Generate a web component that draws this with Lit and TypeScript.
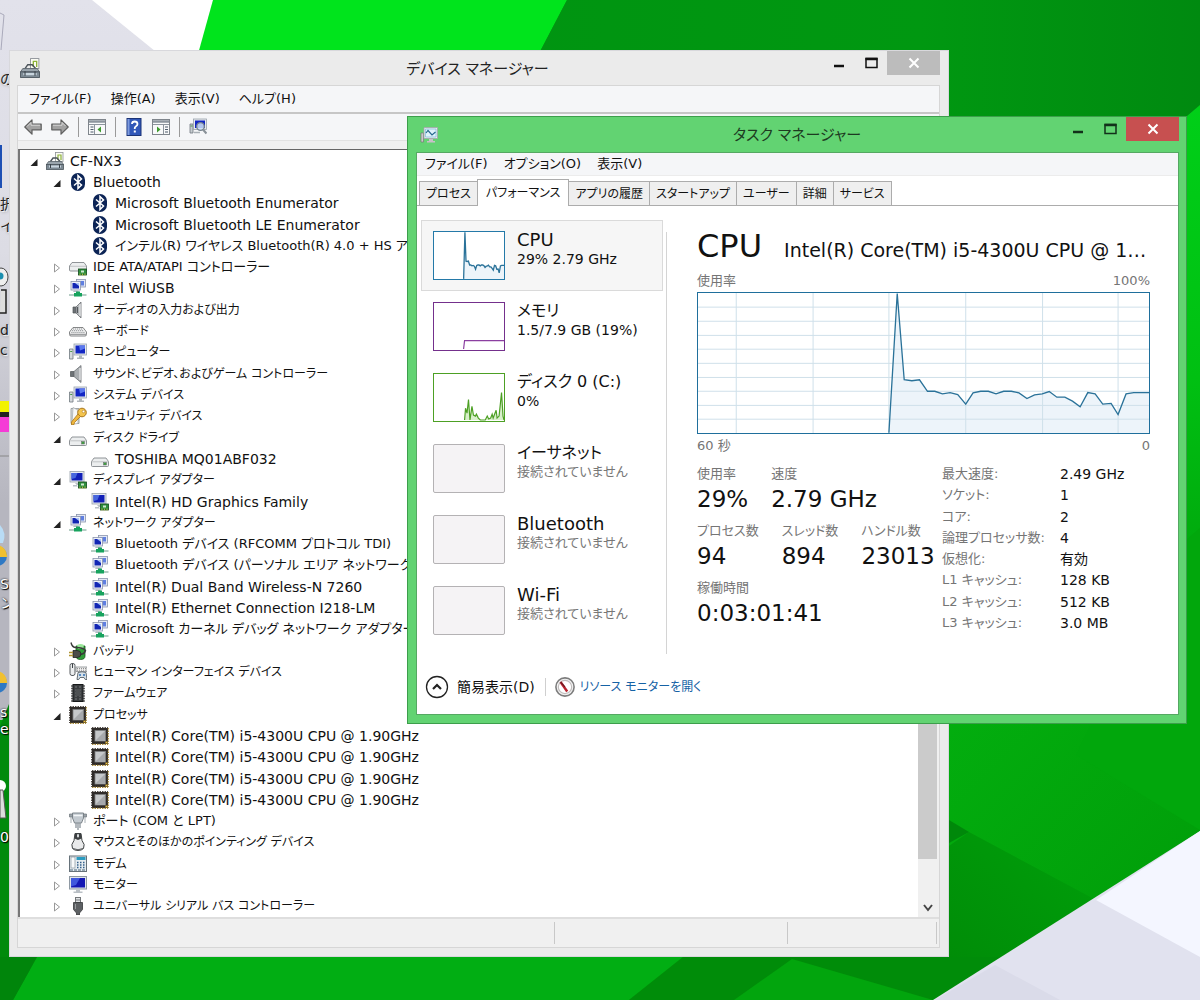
import { LitElement, html, svg, css } from "lit";
import { customElement } from "lit/decorators.js";

/* ---------- Icons, all drawn on an 18 x 18 grid ---------- */

const pcTower = svg`
  <path d="M.500 6h3.500v10H.500z" fill="#d6dadd" stroke="#6f777d" stroke-width=".8"/>
  <path d="M1.200 8.500h2" stroke="#4b9a4b"/>
  <rect x="5" y="1" width="12.500" height="11" fill="#e6eaee" stroke="#9aa4ad" stroke-width=".8"/>
  <rect x="6.500" y="2.500" width="9.500" height="8" fill="#1226c4"/>
  <path d="M10 2.500h6v3l-5 2z" fill="#5a78ee"/>
  <path d="M10 12.500h3v2h2v1.500H8v-1.500h2z" fill="#b0b7bd"/>`;

const chipBadge = svg`
  <rect x="9.500" y="11" width="8" height="6" fill="#2f8f3e" stroke="#0f4a1a" stroke-width=".8"/>
  <path d="M11 17.500v-2M13.500 17.500v-2M16 17.500v-2" stroke="#d9c64a" stroke-width=".8"/>
  <rect x="12" y="12.500" width="3" height="2" fill="#cfe8cf"/>`;

const driveBody = svg`
  <path d="M3 8h12l2.500 3.500v4q0 1-1 1h-15q-1 0-1-1v-4z" fill="#eceeef" stroke="#85898c" stroke-width=".9"/>
  <path d="M1 11.800h16" stroke="#b6b9bb" stroke-width=".8"/>
  <rect x="12.500" y="12.500" width="3" height="2.500" fill="#3f9e3f" stroke="#6b6e70" stroke-width=".5"/>`;

const icons: Record<string, unknown> = {
  root: svg`
    <rect x="9.500" y=".500" width="7.500" height="9" fill="#fbfcf4" stroke="#8c9196" stroke-width=".8"/>
    <path d="M12 8V3h3v5" fill="none" stroke="#8db23a" stroke-width="1.200"/>
    <path d="M4.500 9.500 7 6h4l3 3.500" fill="none" stroke="#4c545a" stroke-width="1.300"/>
    <path d="M2.500 9.500h13l2 3H.500z" fill="#9aa5ad" stroke="#59636b" stroke-width=".8"/>
    <rect x=".500" y="12.500" width="17" height="5" fill="#7c8993" stroke="#4b555d" stroke-width=".8"/>
    <rect x="3" y="13.500" width="12" height="2" fill="#c9d6df"/>
    <path d="M4.500 12v4M13.500 12v4" stroke="#3b444b"/>`,
  bluetooth: svg`
    <rect x="2" y="0" width="14" height="18" rx="7" fill="#0c2456"/>
    <path d="M5 5.500 12.500 12 9 15.500v-13L12.500 6 5 12.500" fill="none" stroke="#fff" stroke-width="1.500"/>`,
  ide: svg`
    <path d="M3 4.500h12L17.500 8v4q0 1-1 1h-15q-1 0-1-1V8z" fill="#eceeef" stroke="#85898c" stroke-width=".9"/>
    <path d="M1 8.300h16" stroke="#b6b9bb" stroke-width=".8"/>${chipBadge}`,
  network: svg`
    <rect x="7.500" y=".500" width="9" height="7.500" fill="#e3e8f5" stroke="#8a95ad" stroke-width=".8"/>
    <rect x="9" y="2" width="6" height="4.500" fill="#5f7fe0"/>
    <rect x="2" y="2.500" width="9.500" height="8.500" fill="#eef1f9" stroke="#8a95ad" stroke-width=".8"/>
    <rect x="3.500" y="4" width="6.500" height="5.500" fill="#1226b4"/>
    <path d="M6 4h4v3z" fill="#a9c2f7"/>
    <path d="M5 11.500h4l1 1.500H4z" fill="#b3bac4"/>
    <path d="M0 16h17.500" stroke="#9dbcb0" stroke-width="1.500"/>
    <path d="M7 12.500h4v1.500h2v3.500H5V14h2z" fill="#17a35e"/>`,
  speaker: svg`
    <path d="M4 6h3v6H4z" fill="#6d7276" stroke="#4f5356" stroke-width=".7"/>
    <path d="M7 6 12 1v16l-5-5z" fill="#b6babd" stroke="#6c7073" stroke-width=".8"/>
    <path d="M8.500 6v6" stroke="#55595c" stroke-width="1.200"/>
    <path d="M11 3v12" stroke="#dcdedf" stroke-width="1.500"/>`,
  audio: svg`
    <path d="M1.500 6.500h3.500v5H1.500z" fill="#6d7276" stroke="#4f5356" stroke-width=".7"/>
    <path d="M5 6.500 12 .500v17l-7-6z" fill="#a9adb0" stroke="#6c7073" stroke-width=".8"/>
    <path d="M11 3v12" stroke="#dcdedf" stroke-width="1.500"/>`,
  keyboard: svg`
    <path d="M4 5.500h10L17.500 10v2.500q0 1.500-1.500 1.500H2q-1.500 0-1.500-1.500V10z" fill="#f2f2f2" stroke="#77797b" stroke-width=".9"/>
    <path d="M4 7h10M3 8.700h12M2.300 10.400h13.500" stroke="#85898c" stroke-width=".9" stroke-dasharray="1.200 .8"/>
    <path d="M1 12.300h16" stroke="#86898b"/>`,
  computer: pcTower,
  key: svg`
    <path d="M2 1.500h8v15H2z" fill="#dfe3e6" stroke="#8c9296" stroke-width=".8"/>
    <path d="M4 .500 9 3v13.500l-6 1z" fill="#f6f7f8" stroke="#a0a6aa" stroke-width=".7"/>
    <circle cx="13" cy="5.500" r="4.300" fill="#f4c44d" stroke="#a9761a"/>
    <circle cx="14.500" cy="4.500" r="1.300" fill="#fff" stroke="#a9761a" stroke-width=".6"/>
    <path d="m9 7 2.500 2.500-6 6-.500 2-2.500.500v-3z" fill="#f0b83e" stroke="#a9761a" stroke-width=".8"/>`,
  disk: driveBody,
  display: svg`
    <rect x="1" y=".500" width="14" height="10.500" fill="#e6eaf0" stroke="#98a1ab" stroke-width=".8"/>
    <rect x="2.500" y="2" width="11" height="7.500" fill="#1220b8"/>
    <path d="M2.500 2h6l-2 5-4 1z" fill="#4767de"/>
    <path d="M6 12h4v2H4v1.500h5" fill="#b9c0c6"/>${chipBadge}`,
  battery: svg`
    <path d="M7 4h9v10q0 3.500-4.500 3.500T7 14z" fill="#2f9e38" stroke="#17501c" stroke-width=".8"/>
    <path d="M8 3q3.500-2 7 0l-1 4H9z" fill="#9be69a"/>
    <path d="M2 .500q1 5 5 5 7 0 9.500 3-1 4-6.500 4" fill="none" stroke="#3b3b3b" stroke-width="1.400"/>
    <path d="M4 8.500h4q4 0 4 3.500t-4 3.500H4z" fill="#4b4b48" stroke="#222" stroke-width=".8"/>
    <path d="M0 10.500h4M0 13.500h4" stroke="#b0942f" stroke-width="1.500"/>`,
  hid: svg`
    <rect x="1" y=".500" width="5" height="12" rx="2" fill="#eceeef" stroke="#565b5f"/>
    <path d="M3.500 1v4" stroke="#3d4246"/>
    <path d="M7 4h11v4.500H7z" fill="#f0f0f0" stroke="#84888b" stroke-width=".8"/>
    <path d="M8 5.500h9M8 7.200h9" stroke="#777" stroke-dasharray="1 1" stroke-width=".8"/>
    <path d="M9 9.500q4-1.500 8 0l1 7q-2 1-3-2h-4q-1 3-3 2z" fill="#d5e0e8" stroke="#586168" stroke-width=".9"/>
    <circle cx="11" cy="12" r="1" fill="#2f6fb5"/><circle cx="15" cy="12" r="1" fill="#2f6fb5"/>`,
  firmware: svg`
    <path d="M2 2h14M2 4.500h14M2 7h14M2 9.500h14M2 12h14M2 14.500h14M2 17h14" stroke="#666" stroke-width="1.300"/>
    <rect x="4" y=".500" width="10" height="17" fill="#3b3e40" stroke="#17191a"/>
    <path d="M7 2v14M11 2v14" stroke="#77797b" stroke-dasharray="2 1"/>
    <rect x="6.500" y="5" width="5" height="7" fill="#4d5052"/>`,
  cpu: svg`
    <rect x="1" y="1" width="16" height="16" fill="#2f2b29"/>
    <path d="M1 17.300h16M17.300 1v16" stroke="#a98a3a" stroke-width="1.200" stroke-dasharray="1.500 1"/>
    <path d="M.500 1v16M1 .500h16" stroke="#55504c" stroke-dasharray="1.500 1"/>
    <rect x="4" y="3.500" width="10.500" height="10.500" fill="#c6c8ca" stroke="#7e8082" stroke-width=".8"/>
    <path d="M4.500 13.500 14 4v9.500z" fill="#a7a9ac"/>
    <path d="M14.500 15.500h2" stroke="#f0c23c" stroke-width="1.800"/>`,
  port: svg`
    <path d="M.500 2h3v3h-3zM14.500 2h3v3h-3z" fill="#9ba3a9" stroke="#6f767b" stroke-width=".7"/>
    <path d="M3.500 1h11v5l-2 5h-7l-2-5z" fill="#c3cad0" stroke="#737b81" stroke-width=".9"/>
    <path d="M4.500 3.500h9" stroke="#f3f6f8" stroke-width="1.500"/>
    <path d="M2 5v6M16 5v6" stroke="#a9b0b5"/>
    <path d="M7 11v5M9 11v7M11 11v5" stroke="#8b949b" stroke-width="1.300"/>`,
  mouse: svg`
    <path d="M6 .500h6l1 7q3.500 4 1.500 8-2 2-5.500 2t-5.500-2q-2-4 1.500-8z" fill="#e9eaeb" stroke="#414446"/>
    <path d="M6 .500h6l.600 5-3.600 1.500-3.600-1.500z" fill="#3d4042"/>
    <rect x="8" y="1" width="2" height="3.500" rx="1" fill="#d9dcde"/>
    <path d="M4 15.500q5 2.500 10 0" stroke="#5b5f61" fill="none"/>`,
  modem: svg`
    <rect x=".500" y="1" width="17" height="15.500" fill="#e6edf1" stroke="#66727a"/>
    <rect x="2" y="2" width="4" height="11" fill="#f8fafb" stroke="#8a969e" stroke-width=".7"/>
    <rect x="7.500" y="2" width="9" height="3" fill="#2a9bc0"/>
    <path d="M8 7.500h8M8 10h8M8 12.500h8" stroke="#35608a" stroke-width="1.500" stroke-dasharray="1.500 1.500"/>
    <path d="M1 15h16" stroke="#4a6478" stroke-dasharray="3 1"/>`,
  monitor: svg`
    <rect x=".500" y=".500" width="17" height="12.500" fill="#dfe4ea" stroke="#8f99a3"/>
    <rect x="2" y="2" width="14" height="9.500" fill="#1418b4"/>
    <path d="M2 2h9l-4 7-5 1.500z" fill="#3f57dd"/>
    <path d="M7 13.500h4v2h2.500v1.500h-9v-1.500H7z" fill="#b9bfc5"/>`,
  usb: svg`
    <rect x="6.500" y=".500" width="5" height="5" fill="#e1e3e5" stroke="#73777a"/>
    <path d="M8 2v2M10 2v2" stroke="#73777a"/>
    <path d="M4.500 5.500h9v7L10.500 16v2h-3v-2l-3-3.500z" fill="#5d6063" stroke="#37393b" stroke-width=".8"/>
    <path d="M6.500 7v5" stroke="#989b9e"/>`,
  taskmgr: svg`
    <path d="M1 7h2.500v9H1z" fill="#c9c9c9" stroke="#777" stroke-width=".7"/>
    <path d="M4 1.500h13.500v11H4z" fill="#e9ecee" stroke="#a0a6aa" stroke-width=".8"/>
    <path d="M5.500 3h10.500v8H5.500z" fill="#dff3fb" stroke="#6db4d6" stroke-width=".6"/>
    <path d="M6 7 8 4.500 12 9l3.500-3" fill="none" stroke="#27688e" stroke-width="1.200"/>
    <path d="M9 13h4v2h2v1.500H7V15h2z" fill="#c9bfc8"/>`,
  meter: svg`
    <circle cx="9" cy="9" r="8.200" fill="#f1f1f1" stroke="#7c7c7c" stroke-width="1.400"/>
    <circle cx="9" cy="9" r="6" fill="#fff" stroke="#c0bcbc"/>
    <path d="M5 4.500 11 13" stroke="#b8202c" stroke-width="2.200"/>
    <path d="M5 4.500 9 9" stroke="#5c1a20"/>`,
  back: svg`<path d="M.800 9 8 1.800v4.400h9.200v5.600H8v4.400z" fill="#a2a2a2" stroke="#5e5e5e" stroke-width="1.200" stroke-linejoin="round"/><path d="M3 8.500 7 4.500v2.700h9" fill="none" stroke="#d8d8d8"/>`,
  forward: svg`<path d="M17.200 9 10 1.800v4.400H.800v5.600H10v4.400z" fill="#a2a2a2" stroke="#5e5e5e" stroke-width="1.200" stroke-linejoin="round"/><path d="M2 7.200h9V4.500L14.500 8" fill="none" stroke="#d8d8d8"/>`,
  tree: svg`
    <rect x=".500" y="1.500" width="17" height="15" fill="#f8f9fa" stroke="#7f858c"/>
    <path d="M1 3.500h16" stroke="#8d959e" stroke-width="2.500"/><path d="M1 6.500h16M6.500 7v9" stroke="#8d959e"/>
    <path d="M2.500 9h3M2.500 11.500h3M2.500 14h3" stroke="#4d5b6b"/>
    <path d="M13 8.500v6L9.500 11.500z" fill="#3c9a2c"/>`,
  help: svg`
    <rect x="2" y=".500" width="14" height="17" fill="#3157b8" stroke="#1b3376"/>
    <path d="M2.500 1h2v16h-2z" fill="#7e9bdc"/>
    <path d="M7 6q0-2.500 2.700-2.500T12.500 6q0 1.500-1.500 2.300T9.700 11" fill="none" stroke="#fff" stroke-width="1.800"/>
    <rect x="8.800" y="12.500" width="2" height="2" fill="#fff"/>`,
  run: svg`
    <rect x=".500" y="1.500" width="17" height="15" fill="#f8f9fa" stroke="#7f858c"/>
    <path d="M1 3.500h16" stroke="#8d959e" stroke-width="2.500"/><path d="M1 6.500h16M11.500 7v9" stroke="#8d959e"/>
    <path d="M13 9h3M13 11.500h3M13 14h3" stroke="#4d5b6b"/>
    <path d="M5 8.500v6l3.500-3z" fill="#3c9a2c"/>`,
  scan: svg`
    <path d="M1 6h3v9H1z" fill="#c6ccd0" stroke="#6f777d" stroke-width=".8"/><path d="M1.500 8h2" stroke="#4b9a4b"/>
    <rect x="4.500" y="1" width="13" height="10.500" fill="#e6eaee" stroke="#98a1aa" stroke-width=".8"/>
    <rect x="6" y="2.500" width="10" height="7.500" fill="#1226c4"/>
    <circle cx="11.500" cy="8.500" r="3.800" fill="#cfe2f8" fill-opacity=".85" stroke="#76828d" stroke-width="1.300"/>
    <path d="m14 11.500 3.500 4" stroke="#8a9299" stroke-width="2.200"/>
    <path d="M5 14.500h6" stroke="#aab1b7" stroke-width="1.500"/>`,
};

const icon = (name: string) =>
  html`<svg class="icon" viewBox="0 0 18 18" aria-hidden="true">${icons[name]}</svg>`;

const script = (text: string) =>
  /[ぁ-ヶ]/.test(text) ? (/[A-Za-z]/.test(text) ? "mixed" : "kana") : "latin";

const base = css`
  * { box-sizing: border-box; }
  :host {
    font-family: "DejaVu Sans", "Noto Sans CJK JP", sans-serif;
    font-feature-settings: "palt";
    font-size: 14px;
    line-height: 20px;
    color: #111;
  }
  button {
    font: inherit;
    font-feature-settings: inherit;
    color: inherit;
    background: none;
    border: 0;
    margin: 0;
    padding: 0;
    text-align: left;
    white-space: nowrap;
  }
  .icon { width: 18px; height: 18px; flex: none; display: block; }
  .titlebar { display: flex; align-items: flex-start; flex: none; }
  .title { flex: 1; text-align: center; font-size: 15px; font-weight: 400; margin: 0; color: #222; }
  .controls { display: flex; }
  .ctl { height: 24px; width: 32px; display: grid; place-items: center; }
  .ctl svg { display: block; width: 14px; height: 14px; }
  .ctl.close { width: 53px; color: #fff; }
  .menu { display: flex; align-items: center; background: #f5f6f8; flex: none; font-size: 13px; }
`;

const controls = html`
  <div class="controls">
    <button class="ctl" aria-label="最小化">
      <svg viewBox="0 0 14 14"><path d="M2 10h10" stroke="currentColor" stroke-width="2.500" /></svg>
    </button>
    <button class="ctl" aria-label="最大化">
      <svg viewBox="0 0 14 14"><path d="M2 2.500h11v9H2z" fill="none" stroke="currentColor" stroke-width="1.500" /><path d="M1.500 3h12" stroke="currentColor" stroke-width="2.500" /></svg>
    </button>
    <button class="ctl close" aria-label="閉じる">
      <svg viewBox="0 0 14 14"><path d="m2.500 2.500 9 9M11.500 2.500l-9 9" stroke="currentColor" stroke-width="2" /></svg>
    </button>
  </div>`;

/* ---------- Device Manager ---------- */

type Node = [level: number, icon: string, label: string, state: "open" | "closed" | "leaf"];

const cpuName = "Intel(R) Core(TM) i5-4300U CPU @ 1.90GHz";

const nodes: Node[] = [
  [0, "root", "CF-NX3", "open"],
  [1, "bluetooth", "Bluetooth", "open"],
  [2, "bluetooth", "Microsoft Bluetooth Enumerator", "leaf"],
  [2, "bluetooth", "Microsoft Bluetooth LE Enumerator", "leaf"],
  [2, "bluetooth", "インテル(R) ワイヤレス Bluetooth(R) 4.0 + HS アダプター", "leaf"],
  [1, "ide", "IDE ATA/ATAPI コントローラー", "closed"],
  [1, "network", "Intel WiUSB", "closed"],
  [1, "speaker", "オーディオの入力および出力", "closed"],
  [1, "keyboard", "キーボード", "closed"],
  [1, "computer", "コンピューター", "closed"],
  [1, "audio", "サウンド、ビデオ、およびゲーム コントローラー", "closed"],
  [1, "computer", "システム デバイス", "closed"],
  [1, "key", "セキュリティ デバイス", "closed"],
  [1, "disk", "ディスク ドライブ", "open"],
  [2, "disk", "TOSHIBA MQ01ABF032", "leaf"],
  [1, "display", "ディスプレイ アダプター", "open"],
  [2, "display", "Intel(R) HD Graphics Family", "leaf"],
  [1, "network", "ネットワーク アダプター", "open"],
  [2, "network", "Bluetooth デバイス (RFCOMM プロトコル TDI)", "leaf"],
  [2, "network", "Bluetooth デバイス (パーソナル エリア ネットワーク)", "leaf"],
  [2, "network", "Intel(R) Dual Band Wireless-N 7260", "leaf"],
  [2, "network", "Intel(R) Ethernet Connection I218-LM", "leaf"],
  [2, "network", "Microsoft カーネル デバッグ ネットワーク アダプター", "leaf"],
  [1, "battery", "バッテリ", "closed"],
  [1, "hid", "ヒューマン インターフェイス デバイス", "closed"],
  [1, "firmware", "ファームウェア", "closed"],
  [1, "cpu", "プロセッサ", "open"],
  [2, "cpu", cpuName, "leaf"],
  [2, "cpu", cpuName, "leaf"],
  [2, "cpu", cpuName, "leaf"],
  [2, "cpu", cpuName, "leaf"],
  [1, "port", "ポート (COM と LPT)", "closed"],
  [1, "mouse", "マウスとそのほかのポインティング デバイス", "closed"],
  [1, "modem", "モデム", "closed"],
  [1, "monitor", "モニター", "closed"],
  [1, "usb", "ユニバーサル シリアル バス コントローラー", "closed"],
];

const arrow = (state: Node[3]) => html`
  <svg class="arrow" viewBox="0 0 8 10" aria-hidden="true">
    ${state === "open" ? svg`<path d="M7.500 2v7H.500z" fill="#222"/>` : ""}
    ${state === "closed" ? svg`<path d="M1.500 1v8L6.500 5z" fill="#fff" stroke="#999"/>` : ""}
  </svg>`;

@customElement("device-manager")
export class DeviceManager extends LitElement {
  static styles = [
    base,
    css`
      :host {
        display: flex;
        flex-direction: column;
        background: #ebebeb;
        border: 1px solid #d8d8dc;
        padding: 0 8px 8px 7px;
      }
      .titlebar { height: 34px; }
      .titlebar .icon { margin: 7px 0 0 3px; width: 20px; height: 20px; }
      .title { padding-top: 8px; margin-left: 92px; }
      .ctl.close { background: #bcbcbc; }
      .client { flex: 1; min-height: 0; display: flex; flex-direction: column; border: 1px solid #d6d6d6; background: #f0f0f0; }
      .menu { height: 26px; padding-left: 11px; gap: 19px; }
      .tools { height: 29px; display: flex; align-items: center; gap: 9px; padding-left: 6px; background: #f5f6f8; border-top: 2px solid #c6c6c6; border-bottom: 1px solid #e2e2e2; flex: none; }
      .sep { width: 1px; height: 20px; background: #9a9a9a; }
      .pane { flex: 1; min-height: 0; margin: 8px 2px 0 0; display: flex; background: #fff; border-top: 1px solid #666; border-left: 2px solid #777; }
      .tree { flex: 1; min-width: 0; display: grid; grid-auto-rows: 1fr; list-style: none; margin: 0; padding: 0; overflow: hidden; }
      .tree li { display: flex; min-height: 0; }
      .row { display: flex; align-items: center; width: 100%; line-height: 16px; padding-left: 10px; }
      .row.l1 { padding-left: 33px; }
      .row.l2 { padding-left: 55px; }
      .arrow { width: 8px; height: 10px; margin: 2px 8px 0 0; flex: none; }
      .row .icon { margin-right: 6px; }
      .mixed { font-size: 13px; }
      .kana { font-size: 12px; }
      .scroll { width: 19px; display: flex; flex-direction: column; background: #f0f0f0; flex: none; }
      .scroll button { height: 19px; display: grid; place-items: center; }
      .scroll svg { width: 10px; height: 8px; display: block; }
      .thumb { flex: 1; background: #cbcbcb; }
      .rest { height: 39px; }
      .status { height: 30px; display: flex; padding: 3px 2px 3px 0; border-top: 2px solid #dedede; flex: none; }
      .status span { border-right: 1px solid #c8c8c8; flex: 148; }
      .status span:first-child { flex: 537; }
      .status span:nth-child(2) { flex: 233; }
    `,
  ];

  render() {
    return html`
      <header class="titlebar">${icon("root")}<h1 class="title">デバイス マネージャー</h1>${controls}</header>
      <div class="client">
        <nav class="menu">
          <button>ファイル(F)</button><button>操作(A)</button><button>表示(V)</button><button>ヘルプ(H)</button>
        </nav>
        <div class="tools">
          <button aria-label="戻る">${icon("back")}</button>
          <button aria-label="進む">${icon("forward")}</button>
          <span class="sep"></span>
          <button aria-label="ツリー">${icon("tree")}</button>
          <span class="sep"></span>
          <button aria-label="ヘルプ">${icon("help")}</button>
          <button aria-label="操作">${icon("run")}</button>
          <span class="sep"></span>
          <button aria-label="スキャン">${icon("scan")}</button>
        </div>
        <div class="pane">
          <ul class="tree">
            ${nodes.map(
              ([level, name, label, state]) => html`
                <li><button class="row l${level}">${arrow(state)}${icon(name)}<span class=${script(label)}>${label}</span></button></li>`,
            )}
          </ul>
          <div class="scroll">
            <button aria-label="上へ"><svg viewBox="0 0 10 8"><path d="m1 7 4-5 4 5" fill="none" stroke="#444" stroke-width="2" /></svg></button>
            <div class="thumb"></div>
            <div class="rest"></div>
            <button aria-label="下へ"><svg viewBox="0 0 10 8"><path d="m1 1 4 5 4-5" fill="none" stroke="#444" stroke-width="2" /></svg></button>
          </div>
        </div>
        <footer class="status"><span></span><span></span><span></span></footer>
      </div>`;
  }
}

/* ---------- Task Manager ---------- */

/* CPU load: x is the time across the chart, y the distance from its top edge. */
const load =
  "574,425 599,2 620,264 643,267 666,264 690,299 712,299 735,307 758,303 781,309 805,338 827,304 850,299 873,299 896,307 919,299 942,299 965,304 989,321 1012,310 1035,307 1056,300 1079,317 1103,317 1126,329 1149,346 1172,303 1194,307 1217,338 1242,336 1263,370 1287,307 1310,303 1356,303";

const plot = (grid: boolean) => svg`
  <polygon points="${load} 1356,426 574,426" fill="#edf4fa"/>
  ${grid
    ? svg`<g stroke="#cfe0ea" fill="none">
        ${[43, 86, 129, 171, 214, 257, 299, 342, 384].map((y) => svg`<path d="M0 ${y}H1356" vector-effect="non-scaling-stroke"/>`)}
        ${[115, 346, 574, 805, 1036, 1263].map((x) => svg`<path d="M${x} 0V426" vector-effect="non-scaling-stroke"/>`)}
      </g>`
    : ""}
  <polyline points="${load}" fill="none" stroke="#2a7299" stroke-width="1.300" vector-effect="non-scaling-stroke"/>`;

const cpuThumb = html`<svg class="thumb cpu" viewBox="0 0 1356 426" preserveAspectRatio="none">${plot(false)}</svg>`;
const memThumb = html`<svg class="thumb mem" viewBox="0 0 71 48" preserveAspectRatio="none">
  <path d="M30 47 31 38.500H71" fill="none" stroke="#8b3fa0" stroke-width="1.200" /></svg>`;
const diskThumb = html`<svg class="thumb disk" viewBox="0 0 71 48" preserveAspectRatio="none">
  <path d="M31 47 32 35l1.500 5 1.500-14 1.500 21 2-14 1.500 9 2 1 1-2 2 4 2 2 5 0 2-4 1.500 3 2-1 1.500-4 1 4 3-8 1 8 2-2 2.500-24 1.500 24 1 4" fill="#d9efcb" stroke="#4da024" stroke-width="1.200" /></svg>`;
const emptyThumb = html`<span class="thumb off"></span>`;

const resources: [unknown, string, string, string][] = [
  [cpuThumb, "CPU", "29% 2.79 GHz", "item on"],
  [memThumb, "メモリ", "1.5/7.9 GB (19%)", "item"],
  [diskThumb, "ディスク 0 (C:)", "0%", "item"],
  [emptyThumb, "イーサネット", "接続されていません", "item idle"],
  [emptyThumb, "Bluetooth", "接続されていません", "item idle"],
  [emptyThumb, "Wi-Fi", "接続されていません", "item idle"],
];

const stats: [string, string][][] = [
  [["使用率", "29%"], ["速度", "2.79 GHz"]],
  [["プロセス数", "94"], ["スレッド数", "894"], ["ハンドル数", "23013"]],
  [["稼働時間", "0:03:01:41"]],
];

const specs: [string, string][] = [
  ["最大速度:", "2.49 GHz"],
  ["ソケット:", "1"],
  ["コア:", "2"],
  ["論理プロセッサ数:", "4"],
  ["仮想化:", "有効"],
  ["L1 キャッシュ:", "128 KB"],
  ["L2 キャッシュ:", "512 KB"],
  ["L3 キャッシュ:", "3.0 MB"],
];

const tabs = ["プロセス", "パフォーマンス", "アプリの履歴", "スタートアップ", "ユーザー", "詳細", "サービス"];

@customElement("task-manager")
export class TaskManager extends LitElement {
  static styles = [
    base,
    css`
      :host {
        display: flex;
        flex-direction: column;
        background: #62d372;
        border: 1px solid #3c9e4b;
        padding: 0 7px 8px 8px;
      }
      .titlebar { height: 35px; }
      .titlebar .icon { margin: 9px 0 0 4px; }
      .title { padding-top: 8px; margin-left: 94px; color: #1d3a21; }
      .ctl { color: #12301a; }
      .ctl.close { background: #c75050; }
      .client { flex: 1; display: flex; flex-direction: column; background: #fff; border: 1px solid #55a862; }
      .menu { height: 23px; padding-left: 8px; gap: 16px; border-bottom: 1px solid #ececec; }
      .tabs { display: flex; align-items: flex-end; height: 30px; padding-left: 2px; border-bottom: 1px solid #acacac; flex: none; font-size: 12px; }
      .tab { height: 24px; border: 1px solid #acacac; border-bottom: 0; margin-right: -1px; padding: 0 6px; background: #efefef; line-height: 22px; text-align: center; }
      .tab.on { height: 27px; padding: 0 8px; background: #fff; margin-bottom: -1px; line-height: 24px; }
      .body { flex: 1; display: flex; padding: 14px 28px 0 4px; }
      .side { width: 242px; flex: none; display: flex; flex-direction: column; }
      .item { height: 71px; display: flex; padding: 10px 11px; gap: 12px; border: 1px solid transparent; line-height: 20px; color: #111; }
      .item.on { background: #f6f6f6; border-color: #dadada; }
      .item strong { display: block; font-size: 18px; line-height: 18px; font-weight: 400; }
      .item strong.kana, .item strong.mixed { font-size: 16px; }
      .item small { display: block; font-size: 14px; }
      .item.idle small { color: #777; font-size: 13px; }
      .thumb { width: 72px; height: 49px; border: 1px solid; flex: none; background: #fff; display: block; }
      .thumb.cpu { border-color: #2479a8; }
      .thumb.mem { border-color: #74308c; }
      .thumb.disk { border-color: #4da024; }
      .thumb.off { border-color: #b4b2b4; border-radius: 2px; background: #f5f3f5; }
      .rule { width: 1px; background: #d4d4d4; margin: 12px 30px 6px 3px; height: 422px; }
      .main { flex: 1; min-width: 0; padding-top: 6px; }
      .head { display: flex; align-items: baseline; gap: 22px; height: 45px; line-height: 40px; }
      .head h2 { font-size: 32px; font-weight: 400; margin: 0; }
      .head p { font-size: 19px; margin: 0; flex: 1; min-width: 0; overflow: hidden; text-overflow: ellipsis; white-space: nowrap; }
      .axis { display: flex; justify-content: space-between; font-size: 13px; color: #757575; }
      .chart { display: block; width: 100%; height: 142px; border: 1px solid #1f6f9c; margin-top: 1px; }
      .axis.low { padding-top: 2px; }
      .detail { display: flex; justify-content: space-between; padding-top: 8px; }
      .stat-row { display: flex; gap: 23px; height: 57px; margin: 0; }
      dt { color: #757575; white-space: nowrap; font-size: 13px; }
      dd { margin: 0; white-space: nowrap; }
      .stat-row dd { font-size: 23px; line-height: 30px; }
      .specs { display: grid; grid-template-columns: 118px 90px; grid-auto-rows: 1fr; align-content: start; height: 170px; margin: 0; }
      .foot { height: 54px; display: flex; align-items: center; padding-left: 8px; flex: none; }
      .more { display: flex; align-items: center; gap: 8px; }
      .more svg { width: 24px; height: 24px; display: block; }
      .bar { width: 1px; height: 18px; background: #cfcfcf; margin: 0 9px 0 10px; }
      .link { display: flex; align-items: center; gap: 5px; color: #1562a5; text-decoration: none; font-size: 12px; }
      .link .icon { width: 20px; height: 20px; }
    `,
  ];

  render() {
    return html`
      <header class="titlebar">${icon("taskmgr")}<h1 class="title">タスク マネージャー</h1>${controls}</header>
      <div class="client">
        <nav class="menu"><button>ファイル(F)</button><button>オプション(O)</button><button>表示(V)</button></nav>
        <div class="tabs" role="tablist">
          ${tabs.map((t, i) => html`<button role="tab" aria-selected=${i === 1} class=${i === 1 ? "tab on" : "tab"}>${t}</button>`)}
        </div>
        <div class="body">
          <div class="side">
            ${resources.map(
              ([thumb, name, value, cls]) => html`
                <button class=${cls}>${thumb}<span><strong class=${script(name)}>${name}</strong><small>${value}</small></span></button>`,
            )}
          </div>
          <div class="rule"></div>
          <section class="main">
            <div class="head"><h2>CPU</h2><p>${cpuName}</p></div>
            <div class="axis"><span>使用率</span><span>100%</span></div>
            <svg class="chart" viewBox="0 0 1356 426" preserveAspectRatio="none">${plot(true)}</svg>
            <div class="axis low"><span>60 秒</span><span>0</span></div>
            <div class="detail">
              <div>
                ${stats.map(
                  (row) => html`<dl class="stat-row">${row.map(([k, v]) => html`<div><dt>${k}</dt><dd>${v}</dd></div>`)}</dl>`,
                )}
              </div>
              <dl class="specs">${specs.map(([k, v]) => html`<dt>${k}</dt><dd>${v}</dd>`)}</dl>
            </div>
          </section>
        </div>
        <footer class="foot">
          <button class="more">
            <svg viewBox="0 0 24 24" aria-hidden="true"><circle cx="12" cy="12" r="10.500" fill="#fff" stroke="#222" stroke-width="1.300" /><path d="m8 14 4-4 4 4" fill="none" stroke="#222" stroke-width="2.200" /></svg>
            簡易表示(D)
          </button>
          <span class="bar"></span>
          <a class="link" href="#">${icon("meter")}リソース モニターを開く</a>
        </footer>
      </div>`;
  }
}

/* ---------- Desktop ---------- */

const labels: [number, string, boolean][] = [
  [69, "の", false],
  [194, "択", false],
  [216, "イ", false],
  [320, "d", false],
  [340, "c", false],
  [574, "S", true],
  [593, "ン", true],
  [702, "s", true],
  [719, "e", true],
  [827, "0", true],
];

@customElement("app-root")
export class AppRoot extends LitElement {
  static styles = css`
    :host {
      display: block;
      position: relative;
      min-height: 100vh;
      overflow: hidden;
      background: #00a00c;
      font-family: "DejaVu Sans", "Noto Sans CJK JP", sans-serif;
    }
    .wall { position: absolute; inset: 0; width: 100%; height: 100%; display: block; }
    .shortcuts { position: absolute; left: 0; top: 0; width: 9px; height: 900px; }
    .label { position: absolute; left: 0; font-size: 14px; line-height: 20px; color: #222; text-shadow: 1px 1px 1px #fff, 1px 1px 3px #777; }
    .label.light { color: #fff; text-shadow: 1px 1px 1px #000, 0 0 2px #000; }
    device-manager { position: absolute; left: 9px; right: 251px; top: 50px; bottom: 43px; }
    task-manager { position: absolute; left: 407px; right: 13px; top: 116px; }
  `;

  render() {
    return html`
      <svg class="wall" viewBox="0 0 1200 1000" preserveAspectRatio="none" aria-hidden="true">
        <defs>
          <linearGradient id="left" x1="0" y1="0" x2="0" y2="1"><stop offset="0" stop-color="#e2e2eb" /><stop offset=".35" stop-color="#dcdce4" /><stop offset=".7" stop-color="#b6b6bf" /></linearGradient>
          <linearGradient id="top" x1="0" y1="0" x2="1" y2="0"><stop offset="0" stop-color="#009411" /><stop offset=".6" stop-color="#009811" /><stop offset="1" stop-color="#008a10" /></linearGradient>
          <linearGradient id="right" x1="0" y1="0" x2="0" y2="1"><stop offset="0" stop-color="#00cf18" /><stop offset=".6" stop-color="#00c012" /><stop offset="1" stop-color="#00a90d" /></linearGradient>
          <linearGradient id="low" x1="0" y1="0" x2="1" y2="1"><stop offset="0" stop-color="#03b00f" /><stop offset="1" stop-color="#009a08" /></linearGradient>
          <linearGradient id="deep" x1="1" y1="0" x2="0" y2="1"><stop offset="0" stop-color="#00a00a" /><stop offset="1" stop-color="#008607" /></linearGradient>
        </defs>
        <path d="M0 0H300V720H0z" fill="url(#left)" />
        <path d="M92 0H213L200 50V120H240z" fill="#fff" />
        <path d="M213 0H567L520 90H188z" fill="#00e41c" />
        <path d="M567 0H1200V120H504z" fill="url(#top)" />
        <path d="M1200 105 1180 122V560L1200 530z" fill="url(#right)" />
        <path d="M0 726 9 704H30V1000H0z" fill="#008a0c" />
        <path d="M900 700H1200V1000H900z" fill="url(#low)" />
        <path d="M1180 545 1200 528V830L1076 755z" fill="#01a70c" />
        <path d="M969 832 1096 900 933 1000H900V880z" fill="url(#deep)" />
        <path d="M949 820 969 832 949 843z" fill="#00880a" />
        <path d="M37 957H683L629 1000H13z" fill="#01ae13" />
        <path d="M0 957H37L13 1000H0z" fill="#00850b" />
        <path d="M683 957H1002L933 1000H629z" fill="#008c09" />
        <path d="M792 959 933 1000H734z" fill="#02a50d" />
        <path d="M1200 831V1000H933z" fill="#e1e2ef" />
        <path d="M1200 831V957L1096 900z" fill="#f4f6ff" />
        <path d="M995 965 1060 1000H935z" fill="#dadbe9" />
      </svg>
      <div class="shortcuts">
        <svg class="wall" viewBox="0 0 9 900" preserveAspectRatio="none" aria-hidden="true">
          <path d="M0 13 4 15 1 50" fill="none" stroke="#aab" />
          <path d="M0 145h2v43H0z" fill="#1d4fb4" />
          <ellipse cx="1" cy="277" rx="7" ry="9" fill="#eee" stroke="#444" /><circle cx="0" cy="276" r="3.500" fill="#1b8fb0" />
          <path d="M1 290h5v23H0" fill="#ddd" stroke="#222" stroke-width="1.500" />
          <path d="M0 401h9v11H0z" fill="#f2f200" /><path d="M0 412h9v5H0z" fill="#222" /><path d="M0 417h9v15H0z" fill="#f53bd6" />
          <path d="M0 456h9" stroke="#888" />
          <path d="M0 525q7 8 3 18H0z" fill="#b9dcf5" />
          <circle cx="-3" cy="556" r="10" fill="#2f79c4" /><path d="M-3 545a11 11 0 0 1 10 12H-3z" fill="#f0c030" />
          <circle cx="-3" cy="683" r="10" fill="#2f79c4" /><path d="M-3 671a11 11 0 0 1 10 12H-3z" fill="#f0c030" />
          <circle cx="0" cy="786" r="6" fill="#fff" /><path d="M0 790h3l3 28H0z" fill="#ddd" stroke="#555" />
        </svg>
        ${labels.map(([y, t, light]) => html`<span class=${light ? "label light" : "label"} style="top:${y}px">${t}</span>`)}
      </div>
      <device-manager></device-manager>
      <task-manager></task-manager>`;
  }
}
